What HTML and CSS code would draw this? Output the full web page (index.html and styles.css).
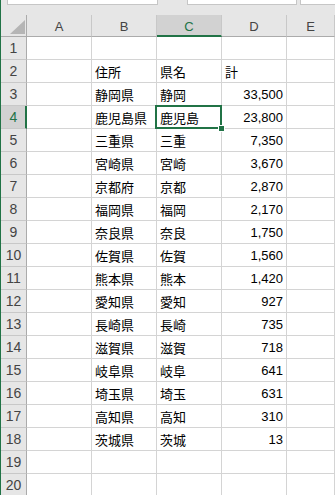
FILE: index.html
```html
<!DOCTYPE html>
<html lang="ja">
<head>
  <meta charset="UTF-8">
  <meta name="viewport" content="width=device-width, initial-scale=1.0">
  <title>Sheet1</title>
  <link rel="stylesheet" href="styles.css">
</head>
<body>

  <div class="app">
    <div class="toolbar">
      <div class="name-box"></div>
      <div class="formula-box"></div>
      <div class="formula-rest"></div>
    </div>

    <div class="sheet">
      <div class="corner"><span class="corner-mark"></span></div>
      <div class="col-head">A</div>
      <div class="col-head">B</div>
      <div class="col-head active">C</div>
      <div class="col-head">D</div>
      <div class="col-head">E</div>

      <div class="row-head">1</div><div class="cell"></div><div class="cell"></div><div class="cell"></div><div class="cell"></div><div class="cell"></div>
      <div class="row-head">2</div><div class="cell"></div><div class="cell">住所</div><div class="cell">県名</div><div class="cell">計</div><div class="cell"></div>
      <div class="row-head">3</div><div class="cell"></div><div class="cell">静岡県</div><div class="cell">静岡</div><div class="cell num">33,500</div><div class="cell"></div>
      <div class="row-head active">4</div><div class="cell"></div><div class="cell">鹿児島県</div><div class="cell selected">鹿児島<span class="handle"></span></div><div class="cell num">23,800</div><div class="cell"></div>
      <div class="row-head">5</div><div class="cell"></div><div class="cell">三重県</div><div class="cell">三重</div><div class="cell num">7,350</div><div class="cell"></div>
      <div class="row-head">6</div><div class="cell"></div><div class="cell">宮崎県</div><div class="cell">宮崎</div><div class="cell num">3,670</div><div class="cell"></div>
      <div class="row-head">7</div><div class="cell"></div><div class="cell">京都府</div><div class="cell">京都</div><div class="cell num">2,870</div><div class="cell"></div>
      <div class="row-head">8</div><div class="cell"></div><div class="cell">福岡県</div><div class="cell">福岡</div><div class="cell num">2,170</div><div class="cell"></div>
      <div class="row-head">9</div><div class="cell"></div><div class="cell">奈良県</div><div class="cell">奈良</div><div class="cell num">1,750</div><div class="cell"></div>
      <div class="row-head">10</div><div class="cell"></div><div class="cell">佐賀県</div><div class="cell">佐賀</div><div class="cell num">1,560</div><div class="cell"></div>
      <div class="row-head">11</div><div class="cell"></div><div class="cell">熊本県</div><div class="cell">熊本</div><div class="cell num">1,420</div><div class="cell"></div>
      <div class="row-head">12</div><div class="cell"></div><div class="cell">愛知県</div><div class="cell">愛知</div><div class="cell num">927</div><div class="cell"></div>
      <div class="row-head">13</div><div class="cell"></div><div class="cell">長崎県</div><div class="cell">長崎</div><div class="cell num">735</div><div class="cell"></div>
      <div class="row-head">14</div><div class="cell"></div><div class="cell">滋賀県</div><div class="cell">滋賀</div><div class="cell num">718</div><div class="cell"></div>
      <div class="row-head">15</div><div class="cell"></div><div class="cell">岐阜県</div><div class="cell">岐阜</div><div class="cell num">641</div><div class="cell"></div>
      <div class="row-head">16</div><div class="cell"></div><div class="cell">埼玉県</div><div class="cell">埼玉</div><div class="cell num">631</div><div class="cell"></div>
      <div class="row-head">17</div><div class="cell"></div><div class="cell">高知県</div><div class="cell">高知</div><div class="cell num">310</div><div class="cell"></div>
      <div class="row-head">18</div><div class="cell"></div><div class="cell">茨城県</div><div class="cell">茨城</div><div class="cell num">13</div><div class="cell"></div>
      <div class="row-head">19</div><div class="cell"></div><div class="cell"></div><div class="cell"></div><div class="cell"></div><div class="cell"></div>
      <div class="row-head">20</div><div class="cell"></div><div class="cell"></div><div class="cell"></div><div class="cell"></div><div class="cell"></div>
    </div>
  </div>

</body>
</html>
```

FILE: styles.css
```css
body {
  margin: 0;
  font-family: "Liberation Sans", "Noto Sans CJK JP", sans-serif;
  font-size: 13px;
  background-color: #ffffff;
  overflow: hidden;
}

.app {
  width: 335px;
  height: 495px;
  box-sizing: border-box;
  border-left: 1px solid #217346;
  overflow: hidden;
}

/* name box + formula bar, cut off at the top */
.toolbar {
  display: flex;
  height: 15px;
  background-color: #e6e6e6;
}

.name-box,
.formula-box,
.formula-rest {
  height: 5px;
  box-sizing: border-box;
  background-color: #ffffff;
  border: 1px solid #c6c6c6;
  border-top: none;
}

.name-box {
  margin-left: 6px;
  width: 151px;
}

.formula-box {
  margin-left: 29px;
  width: 110px;
}

.formula-rest {
  margin-left: 3px;
  flex: 1;
  border-right: none;
}

.sheet {
  display: grid;
  grid-template-columns: 26px 65px 65px 65px 65px 1fr;
  grid-template-rows: 22px repeat(20, 23px);
}

.sheet > div {
  box-sizing: border-box;
}

.corner {
  background-color: #e6e6e6;
  border-right: 1px solid #ababab;
  border-bottom: 1px solid #ababab;
  display: flex;
  justify-content: flex-end;
  align-items: flex-end;
  padding: 0 1px 2px 0;
}

.corner-mark {
  width: 0;
  height: 0;
  border-left: 15px solid transparent;
  border-bottom: 14px solid #b5b5b5;
}

.col-head {
  background-color: #e6e6e6;
  color: #444444;
  border-right: 1px solid #c8c8c8;
  border-bottom: 1px solid #ababab;
  display: flex;
  justify-content: center;
  align-items: center;
  padding-top: 2px;
}

.col-head.active {
  background-color: #d2d2d2;
  color: #217346;
  border-bottom: 2px solid #217346;
  padding-top: 3px;
}

.row-head {
  background-color: #e6e6e6;
  color: #444444;
  font-size: 14px;
  border-right: 1px solid #ababab;
  border-bottom: 1px solid #c8c8c8;
  display: flex;
  justify-content: center;
  align-items: center;
}

.row-head.active {
  background-color: #d2d2d2;
  color: #217346;
  border-right: 2px solid #217346;
  padding-left: 1px;
}

.cell {
  border-right: 1px solid #d4d4d4;
  border-bottom: 1px solid #d4d4d4;
  display: flex;
  align-items: center;
  padding: 1px 3px 0;
  white-space: nowrap;
  color: #000000;
  font-family: "Noto Sans CJK JP", "Liberation Sans", sans-serif;
}

.cell.num {
  justify-content: flex-end;
  font-family: "Liberation Sans", sans-serif;
}

.cell.selected {
  position: relative;
}

.cell.selected::before {
  content: "";
  position: absolute;
  left: -2px;
  top: -1px;
  right: -1px;
  bottom: -1px;
  border: 2px solid #217346;
}

.handle {
  position: absolute;
  right: -4px;
  bottom: -4px;
  width: 5px;
  height: 5px;
  background-color: #217346;
  border: 1px solid #ffffff;
}
```
